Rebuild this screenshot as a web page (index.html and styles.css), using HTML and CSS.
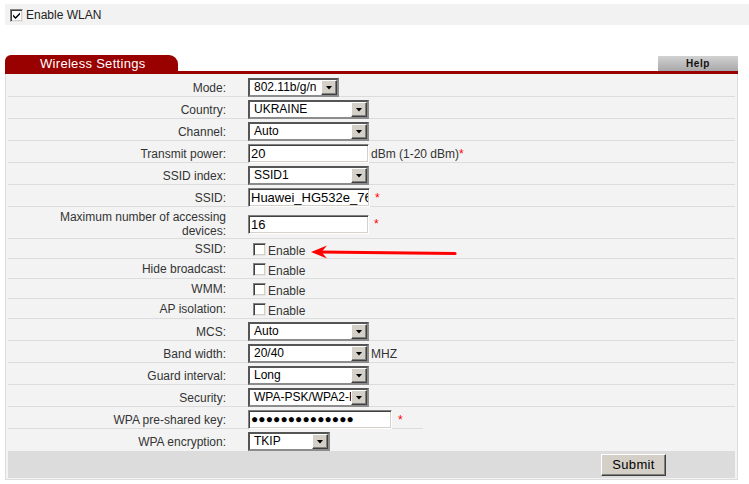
FILE: index.html
```html
<!DOCTYPE html>
<html>
<head>
<meta charset="utf-8">
<title>Wireless Settings</title>
<link rel="stylesheet" href="styles.css">
</head>
<body>
<div class="page">
  <div class="topbar">
    <span class="cb"><svg width="9" height="9" viewBox="0 0 9 9"><path d="M1 3.5 L3.5 6 L8 1.5 L8 3.5 L3.5 8 L1 5.5 Z" fill="#000"/></svg></span>
    <span class="top-text">Enable WLAN</span>
  </div>

  <div class="tabs">
    <div class="tab-main">Wireless Settings</div>
    <div class="tab-help">Help</div>
  </div>

  <div class="panel">
    <div class="row">
      <div class="lbl">Mode:</div>
      <div class="val"><span class="sel w91"><span class="sel-text">802.11b/g/n</span><span class="sel-btn"></span></span></div>
    </div>
    <div class="row">
      <div class="lbl">Country:</div>
      <div class="val"><span class="sel w121"><span class="sel-text">UKRAINE</span><span class="sel-btn"></span></span></div>
    </div>
    <div class="row">
      <div class="lbl">Channel:</div>
      <div class="val"><span class="sel w121"><span class="sel-text">Auto</span><span class="sel-btn"></span></span></div>
    </div>
    <div class="row">
      <div class="lbl">Transmit power:</div>
      <div class="val"><input class="inp w121" type="text" value="20" readonly><span class="unit">dBm (1-20 dBm)</span><span class="req tight">*</span></div>
    </div>
    <div class="row">
      <div class="lbl">SSID index:</div>
      <div class="val"><span class="sel w121"><span class="sel-text">SSID1</span><span class="sel-btn"></span></span></div>
    </div>
    <div class="row">
      <div class="lbl">SSID:</div>
      <div class="val"><input class="inp w122" type="text" value="Huawei_HG532e_76F8" readonly><span class="req">*</span></div>
    </div>
    <div class="row tall">
      <div class="lbl">Maximum number of accessing<br>devices:</div>
      <div class="val"><input class="inp w121" type="text" value="16" readonly><span class="req">*</span></div>
    </div>
    <div class="row chk">
      <div class="lbl">SSID:</div>
      <div class="val"><span class="cb box"></span><span class="cb-text">Enable</span></div>
    </div>
    <div class="row chk">
      <div class="lbl">Hide broadcast:</div>
      <div class="val"><span class="cb box"></span><span class="cb-text">Enable</span></div>
    </div>
    <div class="row chk">
      <div class="lbl">WMM:</div>
      <div class="val"><span class="cb box"></span><span class="cb-text">Enable</span></div>
    </div>
    <div class="row chk">
      <div class="lbl">AP isolation:</div>
      <div class="val"><span class="cb box"></span><span class="cb-text">Enable</span></div>
    </div>
    <div class="row">
      <div class="lbl">MCS:</div>
      <div class="val"><span class="sel w121"><span class="sel-text">Auto</span><span class="sel-btn"></span></span></div>
    </div>
    <div class="row">
      <div class="lbl">Band width:</div>
      <div class="val"><span class="sel w121"><span class="sel-text">20/40</span><span class="sel-btn"></span></span><span class="unit">MHZ</span></div>
    </div>
    <div class="row">
      <div class="lbl">Guard interval:</div>
      <div class="val"><span class="sel w121"><span class="sel-text">Long</span><span class="sel-btn"></span></span></div>
    </div>
    <div class="row">
      <div class="lbl">Security:</div>
      <div class="val"><span class="sel w121"><span class="sel-text">WPA-PSK/WPA2-P</span><span class="sel-btn"></span></span></div>
    </div>
    <div class="row partial">
      <div class="lbl">WPA pre-shared key:</div>
      <div class="val"><span class="inp pw w144">●●●●●●●●●●●●●●</span><span class="req wide">*</span></div>
    </div>
    <div class="row last">
      <div class="lbl">WPA encryption:</div>
      <div class="val"><span class="sel w82"><span class="sel-text">TKIP</span><span class="sel-btn"></span></span></div>
    </div>
    <div class="actions">
      <button class="btn" type="button">Submit</button>
    </div>
  </div>

  <svg class="arrow" width="749" height="484" viewBox="0 0 749 484">
    <line x1="320" y1="252" x2="455" y2="253.5" stroke="#ff0000" stroke-width="3.2" stroke-linecap="round"/>
    <path d="M311 252 L327 245.5 L321.5 252 L327 258.5 Z" fill="#ff0000"/>
  </svg>
</div>
</body>
</html>
```

FILE: styles.css
```css
* { box-sizing: border-box; }

body {
  margin: 0;
  background: #ffffff;
  font-family: "Liberation Sans", Arial, sans-serif;
  font-size: 12px;
  color: #333333;
}

.page {
  position: relative;
  width: 749px;
  height: 484px;
  padding: 4px 0 0 5px;
}

/* top bar */
.topbar {
  height: 21px;
  background: #f2f2f2;
  display: flex;
  align-items: center;
  padding-left: 5px;
  padding-top: 1px;
}
.top-text { margin-left: 3px; color: #222222; }

.cb {
  width: 13px;
  height: 13px;
  flex: none;
  background: #ffffff;
  border: 1px solid;
  border-color: #808080 #e6e6e6 #e6e6e6 #808080;
  box-shadow: inset 1px 1px 0 #404040, inset -1px -1px 0 #d4d0c8;
  display: inline-flex;
  align-items: center;
  justify-content: center;
}
.cb svg { display: block; }

/* tabs */
.tabs {
  margin-top: 30px;
  width: 733px;
  height: 19px;
  border-bottom: 3px solid #990000;
  display: flex;
  justify-content: space-between;
  align-items: flex-end;
}
.tab-main {
  width: 173px;
  height: 16px;
  background: #990000;
  border-radius: 6px 9px 0 0;
  color: #ffffff;
  font-size: 13px;
  line-height: 17px;
  padding-left: 35px;
  letter-spacing: 0.3px;
}
.tab-help {
  width: 80px;
  height: 15px;
  background: linear-gradient(#d2d2d2, #a8a8a8);
  color: #111111;
  font-size: 10px;
  font-weight: bold;
  line-height: 15px;
  text-align: center;
  letter-spacing: 0.6px;
}

/* panel */
.panel {
  width: 733px;
  background: #f3f3f3;
  border: 1px solid #dcdcdc;
  border-top: 0;
  padding: 1px 2px 1px 2px;
}

.row {
  display: grid;
  grid-template-columns: 222px 1fr;
  column-gap: 18px;
  align-items: center;
  height: 22px;
  padding-top: 3px;
  border-bottom: 1px solid #dcdcdc;
}
.row.tall { height: 32px; padding-top: 3px; }
.row.tall .lbl { line-height: 14px; }
.row.chk { height: 20px; padding-top: 1px; }
.row.partial {
  border-bottom: 0;
  padding-bottom: 1px;
  background: linear-gradient(#dcdcdc, #dcdcdc) no-repeat 0 100% / 415px 1px;
}
.row.last { border-bottom: 0; padding-bottom: 1px; }

.lbl {
  text-align: right;
  padding-right: 4px;
  color: #333333;
}
.val {
  display: flex;
  align-items: center;
  color: #333333;
}

/* select look-alike */
.sel {
  display: inline-flex;
  height: 19px;
  border: 2px solid;
  border-color: #555555 #8c8c8c #8c8c8c #555555;
  background: #ffffff;
  color: #000000;
  font-size: 12px;
  overflow: hidden;
}
.sel-text {
  flex: 1;
  min-width: 0;
  padding-left: 4px;
  line-height: 15px;
  white-space: nowrap;
  overflow: hidden;
}
.sel-btn {
  width: 16px;
  flex: none;
  background: #d4d0c8;
  border: 1px solid;
  border-color: #ffffff #404040 #404040 #ffffff;
  box-shadow: inset -1px -1px 0 #808080;
  display: flex;
  align-items: center;
  justify-content: center;
}
.sel-btn::after {
  content: "";
  width: 7px;
  height: 4px;
  background: #000000;
  clip-path: polygon(0 0, 100% 0, 50% 100%);
}

.w82 { width: 82px; }
.w91 { width: 91px; }
.w121 { width: 121px; }
.w122 { width: 122px; }
.w144 { width: 144px; }

/* text inputs */
.inp {
  height: 19px;
  margin: 0;
  border: 1px solid;
  border-color: #808080 #ffffff #ffffff #808080;
  box-shadow: inset 1px 1px 0 #404040, inset -1px -1px 0 #d4d0c8;
  background: #ffffff;
  color: #000000;
  font-family: "Liberation Sans", Arial, sans-serif;
  font-size: 13px;
  padding: 0 1px 0 2px;
  outline: none;
}
.inp.pw {
  display: inline-block;
  font-size: 12px;
  line-height: 17px;
  letter-spacing: 0.1px;
  overflow: hidden;
  white-space: nowrap;
}

.unit { margin-left: 2px; color: #333333; }
.req { color: #ff0000; font-size: 12px; margin-left: 5px; }
.req.tight { margin-left: 0; }
.req.wide { margin-left: 6px; }

.box { margin-left: 5px; margin-top: 1px; }
.cb-text { margin-left: 2px; margin-top: 3px; color: #333333; }

/* actions */
.actions {
  height: 27px;
  background: #dcdcdc;
  display: flex;
  justify-content: flex-end;
  align-items: center;
  padding-right: 69px;
}
.btn {
  width: 65px;
  height: 22px;
  padding: 0;
  background: #d4d0c8;
  border: 1px solid;
  border-color: #ffffff #404040 #404040 #ffffff;
  box-shadow: inset -1px -1px 0 #808080;
  font-family: "Liberation Sans", Arial, sans-serif;
  font-size: 13px;
  letter-spacing: 0.3px;
  color: #000000;
}

/* annotation arrow overlay */
.arrow {
  position: absolute;
  left: 0;
  top: 0;
  pointer-events: none;
}
```
